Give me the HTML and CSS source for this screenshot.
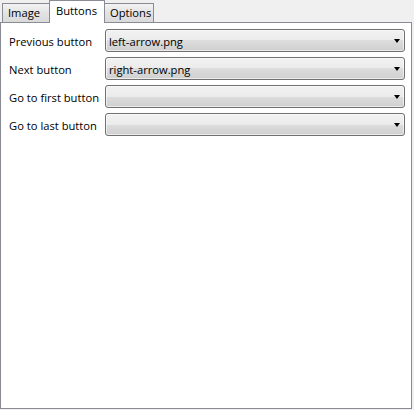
FILE: index.html
```html
<!DOCTYPE html>
<html>
<head>
<meta charset="utf-8">
<link rel="stylesheet" href="styles.css">
</head>
<body>
<div class="window">
  <div class="tabs">
    <div class="tab tab-first">Image</div>
    <div class="tab tab-active">Buttons</div>
    <div class="tab tab-last">Options</div>
  </div>
  <div class="panel">
    <div class="form">
      <div class="label">Previous button</div>
      <div class="combo"><span class="value">left-arrow.png</span><span class="arrow"></span></div>
      <div class="label">Next button</div>
      <div class="combo"><span class="value">right-arrow.png</span><span class="arrow"></span></div>
      <div class="label">Go to first button</div>
      <div class="combo"><span class="value"></span><span class="arrow"></span></div>
      <div class="label">Go to last button</div>
      <div class="combo"><span class="value"></span><span class="arrow"></span></div>
    </div>
  </div>
</div>
</body>
</html>
```
FILE: styles.css
```css
html, body {
  margin: 0;
  padding: 0;
  background: #f0f0f0;
}
body {
  width: 414px;
  height: 410px;
  overflow: hidden;
  font-family: "Open Sans", "Liberation Sans", Arial, sans-serif;
  font-size: 11.2px;
  color: #000;
}
.window {
  display: flex;
  flex-direction: column;
  width: 412px;
  height: 409px;
}
.tabs {
  display: flex;
  align-items: flex-end;
  height: 22px;
  padding-left: 2px;
  position: relative;
  z-index: 1;
}
.tab {
  box-sizing: border-box;
  height: 19px;
  border-top: 1px solid #898c95;
  background: linear-gradient(#f3f3f3, #e3e3e3 50%, #dadada);
  line-height: 18px;
  padding-left: 5px;
}
.tab-first {
  width: 47px;
  border-left: 1px solid #898c95;
}
.tab-active {
  width: 56px;
  height: 23px;
  margin-bottom: -1px;
  background: #fff;
  border: 1px solid #898c95;
  border-bottom: none;
  padding-left: 6px;
  line-height: 19px;
}
.tab-last {
  width: 49px;
  border-right: 1px solid #898c95;
}
.panel {
  flex: 1;
  background: #fff;
  border: 1px solid #898c95;
  padding: 6px 6px 0 8px;
}
.form {
  display: grid;
  grid-template-columns: 90px 1fr;
  column-gap: 6px;
  row-gap: 5px;
  align-items: center;
}
.label {
  white-space: nowrap;
  padding-top: 1px;
}
.combo {
  box-sizing: border-box;
  height: 23px;
  border: 1px solid #707070;
  border-radius: 3px;
  background: linear-gradient(#f2f2f2, #ebebeb 50%, #dddddd 50%, #cfcfcf);
  box-shadow: inset 0 0 0 1px rgba(255,255,255,0.6);
  display: flex;
  align-items: center;
  padding: 1px 4px 0 3px;
}
.value {
  flex: 1;
}
.arrow {
  width: 0;
  height: 0;
  border-left: 3.5px solid transparent;
  border-right: 3.5px solid transparent;
  border-top: 4px solid #000;
  margin-top: -1px;
}
```
